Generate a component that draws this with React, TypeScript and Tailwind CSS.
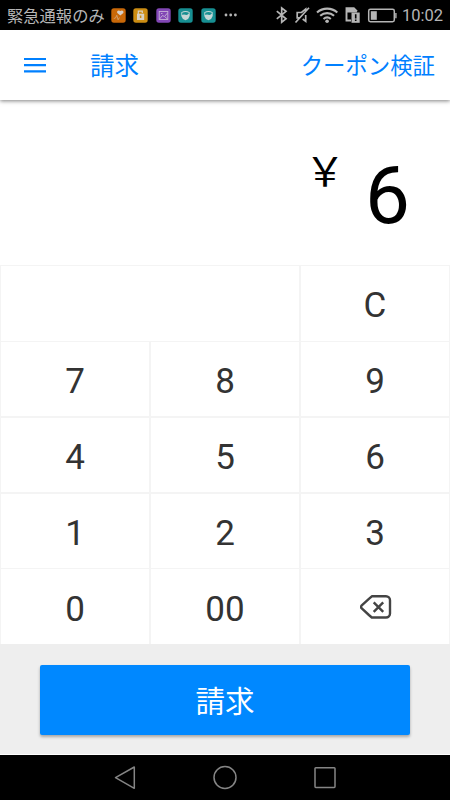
import React from "react";

const font = "font-['Roboto','Noto_Sans_CJK_JP',sans-serif]";

function Badge({ color, children }: { color: string; children: React.ReactNode }) {
  return (
    <svg width="15" height="15" viewBox="0 0 15 15" className="shrink-0">
      <rect x="0.3" y="0.3" width="14.4" height="14.4" rx="2.6" fill={color} />
      {children}
    </svg>
  );
}

function Shield() {
  return (
    <Badge color="#178f92">
      <path d="M3.300 4.300Q7.500 1.800 11.700 4.300V8Q11 11 7.500 12.300 4 11 3.300 8z" fill="#c4d6d6" />
      <path d="M4.200 4.800Q7.500 3 10.800 4.800V5.500Q9.500 7.500 7.500 6.800T4.200 7z" fill="#178f92" />
    </Badge>
  );
}

function StatusBar() {
  return (
    <div className="flex h-[30px] items-center bg-black text-[#b5b5b5]">
      <span className="ml-[7px] w-[104px] shrink-0 whitespace-nowrap pt-[3px] text-[16.3px] leading-[30px]">緊急通報のみ</span>
      <div className="flex gap-[7.4px]">
        <Badge color="#c96808">
          <path d="M9.300 7.600 6.300 4.900C5.300 2.800 7.800 1.500 9.300 3.100c1.500-1.600 4-.3 3 1.800z" fill="#d8d0c8" />
          <path d="M2.800 10.500 4.500 10 5.800 7.300l1.300 4.500 1.300-2.300" fill="none" stroke="#d5a97e" strokeWidth="0.8" />
        </Badge>
        <Badge color="#cc8d13">
          <rect x="4" y="5.700" width="7.200" height="6.300" fill="#d8d2c4" />
          <path d="M5.300 6V3.200h4V5" fill="none" stroke="#d8d2c4" strokeWidth="1.200" />
          <path d="M7.600 7.500v2.500" stroke="#cc8d13" strokeWidth="1.500" />
        </Badge>
        <Badge color="#8247b5">
          <rect x="3.200" y="3.500" width="8.600" height="8" fill="none" stroke="#c7b2d8" strokeWidth="0.9" />
          <path d="m3.500 11 3-3.500 2 1 3-3.500M5 5.500h1.500M9 9l2.500 2" fill="none" stroke="#c7b2d8" strokeWidth="0.9" />
        </Badge>
        <Shield />
        <Shield />
      </div>
      <svg width="14" height="4" viewBox="0 0 14 4" className="ml-[8px]" fill="#b5b5b5">
        <circle cx="2" cy="2" r="1.400" /><circle cx="6.700" cy="2" r="1.400" /><circle cx="11.400" cy="2" r="1.400" />
      </svg>
      <svg width="124" height="20" viewBox="274 5 124 20" className="ml-auto shrink-0" fill="none" stroke="#b5b5b5" strokeWidth="1.700">
        <path d="m276.800 11.200 9.200 7.600-4.300 3.400V8L286 11.300l-9.200 7.600" />
        <path d="M309 7.800 295.500 22.500M299.500 17.800h-2.300v-5.300h4.300l4.200-3.500v2.500M305.700 15v6.300l-3-2.300" />
        <path d="M317 12.500c5.800-5.200 14.500-5.200 20.300 0M320.200 15.800c4-3.600 9.900-3.600 13.900 0M323.500 19c2.200-1.900 5.100-1.900 7.300 0" strokeWidth="2.100" />
        <circle cx="327.100" cy="21.200" r="1.800" fill="#b5b5b5" stroke="none" />
        <path d="M351 20.500h-4.500V8.300h7.300l3.200 3.200" strokeWidth="1.900" />
        <path d="M347 8h6l4 4.500H347z" fill="#b5b5b5" stroke="none" />
        <path d="M351.500 12.500h8.200v10.300h-8.200z" fill="#b5b5b5" stroke="none" />
        <path d="M355.700 14.300v4.200M355.700 19.500v1.600" stroke="#000" strokeWidth="1.600" />
        <rect x="368.700" y="9.200" width="25.600" height="12.600" rx="1.700" strokeWidth="1.500" />
        <path d="M370.800 11.200h6v8.600h-6z" fill="#b5b5b5" stroke="none" />
        <path d="M395.900 13v5.200" strokeWidth="1.400" />
      </svg>
      <span className="ml-[4px] mr-[7px] w-[41px] shrink-0 pt-[2px] text-[16.500px] leading-[30px]">10:02</span>
    </div>
  );
}

function Key({ label, className = "" }: { label: React.ReactNode; className?: string }) {
  return (
    <button className={`flex items-center justify-center border-x border-t border-[#f4f4f4] bg-white text-[35px] leading-none text-[#333] ${className}`}>
      {label}
    </button>
  );
}

function Backspace() {
  return (
    <svg width="32" height="24" viewBox="0 0 32 24" fill="none" stroke="#444">
      <path d="M11.800 1.300H26a4 4 0 0 1 4 4v13.200a4 4 0 0 1-4 4H11.800L8.900 20 1.500 13.200Q.5 12 1.500 10.700L8.900 3.800z" strokeWidth="2.400" strokeLinejoin="round" />
      <path d="m13.700 7.300 9.500 9.500M23.200 7.300l-9.500 9.500" strokeWidth="2.400" />
    </svg>
  );
}

export default function App() {
  return (
    <div className={`flex h-[800px] w-[450px] flex-col overflow-hidden bg-white ${font}`}>
      <StatusBar />
      <header className="z-10 flex h-[70px] shrink-0 items-center bg-white text-[#0080ff] shadow-[0_1px_4px_rgba(0,0,0,0.5)]">
        <svg width="22" height="16" viewBox="0 0 22 16" className="ml-[24px]" stroke="#0080ff" strokeWidth="2.200">
          <path d="M0 2h22M0 8.100h22M0 14.300h22" />
        </svg>
        <h1 className="ml-[44px] pt-[4px] text-[24.500px] font-normal leading-[66px]">請求</h1>
        <span className="ml-auto mr-[15px] pt-[2px] text-[22.400px] leading-[68px]">クーポン検証</span>
      </header>
      <div className="flex h-[165px] shrink-0 items-start justify-end pr-[40px] text-black">
        <span className="mt-[49px] font-['Noto_Sans_CJK_JP',sans-serif] text-[40px] leading-[41px]">￥</span>
        <span className="ml-[20px] mt-[56px] text-[80px] leading-[80px]">6</span>
      </div>
      <div className="grid h-[379px] shrink-0 grid-cols-3 grid-rows-[76px_76px_76px_75px_76px]">
        <Key label="" className="col-span-2" />
        <Key label="C" className="pt-[3px]" />
        <Key label="7" className="border-b pt-[5px]" />
        <Key label="8" className="border-b pt-[5px]" />
        <Key label="9" className="border-b pt-[5px]" />
        <Key label="4" className="border-b pt-[5px]" />
        <Key label="5" className="border-b pt-[5px]" />
        <Key label="6" className="border-b pt-[5px]" />
        <Key label="1" className="pt-[5px]" />
        <Key label="2" className="pt-[5px]" />
        <Key label="3" className="pt-[5px]" />
        <Key label="0" className="pt-[5px]" />
        <Key label="00" className="pt-[5px]" />
        <Key label={<Backspace />} className="pl-[1px]" />
      </div>
      <div className="flex h-[111px] shrink-0 justify-center border-b border-white bg-[#eee] pt-[21px]">
        <button className="h-[70px] w-[370px] rounded-[2px] bg-[#0088ff] pt-[4px] text-[29.500px] leading-[66px] text-white shadow-[0_2px_3px_rgba(0,0,0,0.3)]">
          請求
        </button>
      </div>
      <nav className="flex h-[45px] shrink-0 bg-black">
        <svg width="450" height="45" viewBox="0 755 450 45" fill="none" stroke="#858585" strokeWidth="1.500">
          <path d="M134.300 767v21.300L115.500 777.600z" strokeLinejoin="round" />
          <circle cx="225" cy="777.500" r="11" />
          <rect x="315" y="767.700" width="20" height="19.700" rx="0.8" />
        </svg>
      </nav>
    </div>
  );
}
